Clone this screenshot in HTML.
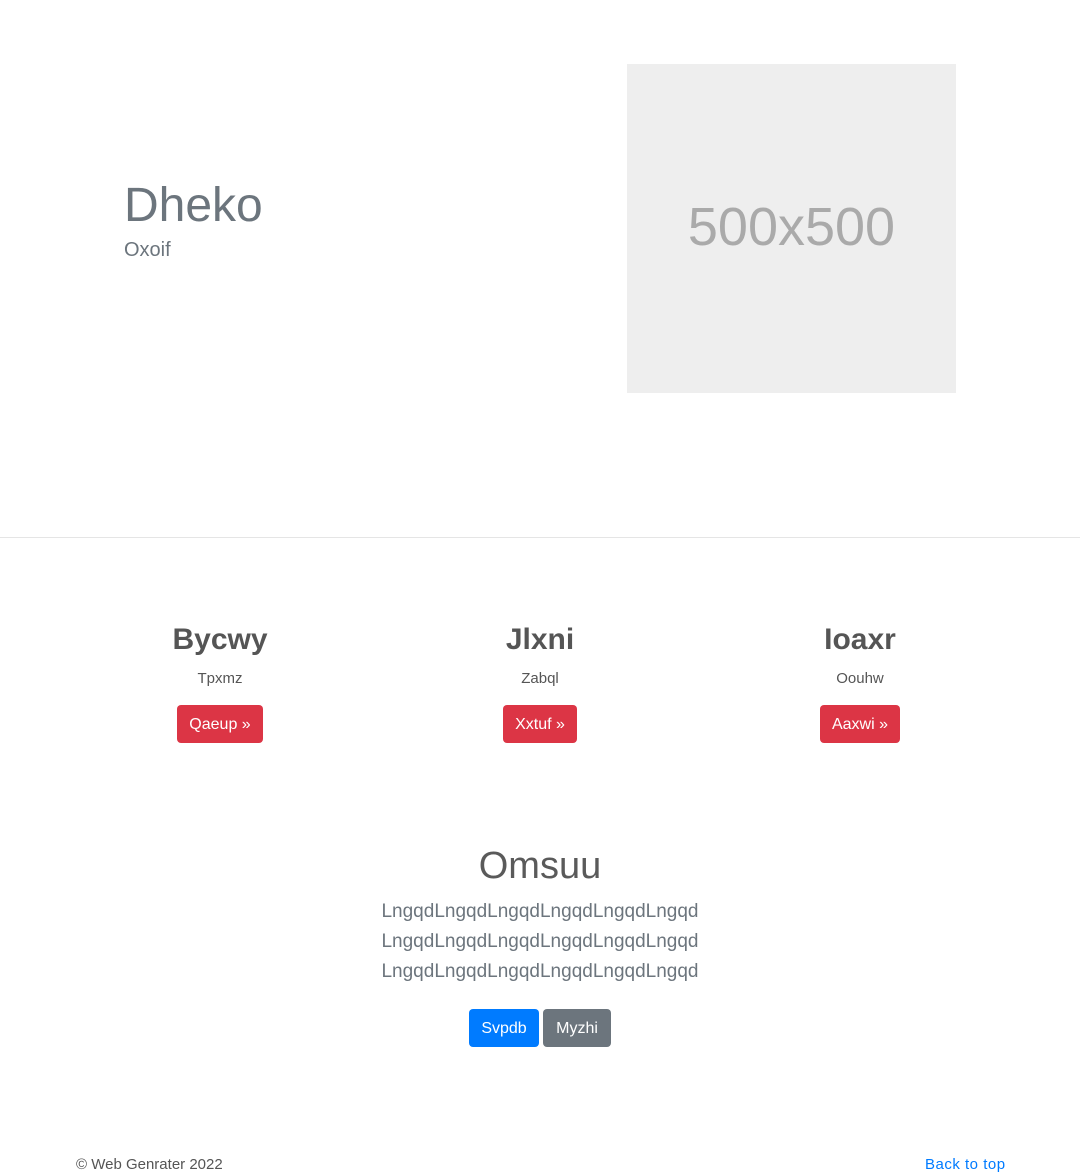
<!DOCTYPE html>
<html><head><meta charset="utf-8"><style>
*{margin:0;padding:0;box-sizing:border-box}
body{width:1080px;height:1175px;background:#fff;font-family:"Liberation Sans",sans-serif;position:relative;overflow:hidden;color:#212529}
.a{position:absolute}
.btn{position:absolute;height:38px;line-height:40px;color:#fff;border-radius:4px;font-size:16px;text-align:center}
.red{background:#dc3545}
.h{font-size:30px;font-weight:bold;color:#555;text-align:center;width:300px}
.s{font-size:15px;color:#555;text-align:center;width:300px}
.c{text-align:center;width:1080px;left:0}
</style></head><body>
<div class="a" style="left:124px;top:178px;font-size:48px;color:#6c757d;font-weight:300">Dheko</div>
<div class="a" style="left:124px;top:239px;font-size:20px;color:#6c757d;font-weight:300">Oxoif</div>
<div class="a" style="left:627px;top:64px;width:329px;height:329px;background:#eee;color:#aaa;font-size:54px;display:flex;align-items:center;justify-content:center;padding-bottom:4px">500x500</div>
<div class="a" style="left:0;top:537px;width:1080px;height:1px;background:#e5e5e5"></div>

<div class="a h" style="left:70px;top:623px">Bycwy</div>
<div class="a s" style="left:70px;top:670px">Tpxmz</div>
<div class="btn red" style="left:177px;top:705px;width:86px">Qaeup »</div>

<div class="a h" style="left:390px;top:623px">Jlxni</div>
<div class="a s" style="left:390px;top:670px">Zabql</div>
<div class="btn red" style="left:503px;top:705px;width:74px">Xxtuf »</div>

<div class="a h" style="left:710px;top:623px">Ioaxr</div>
<div class="a s" style="left:710px;top:670px">Oouhw</div>
<div class="btn red" style="left:820px;top:705px;width:80px">Aaxwi »</div>

<div class="a c" style="top:845px;font-size:38px;color:#5a5a5a;font-weight:300">Omsuu</div>
<div class="a c" style="top:897px;font-size:19px;color:#6c757d;line-height:30px;font-weight:300">LngqdLngqdLngqdLngqdLngqdLngqd<br>LngqdLngqdLngqdLngqdLngqdLngqd<br>LngqdLngqdLngqdLngqdLngqdLngqd</div>
<div class="btn" style="left:469px;top:1009px;width:70px;background:#007bff">Svpdb</div>
<div class="btn" style="left:543px;top:1009px;width:68px;background:#6c757d">Myzhi</div>

<div class="a" style="left:76px;top:1156px;font-size:15px;color:#555">© Web Genrater 2022</div>
<div class="a" style="left:925px;top:1156px;font-size:15px;color:#007bff;letter-spacing:0.5px">Back to top</div>
</body></html>
